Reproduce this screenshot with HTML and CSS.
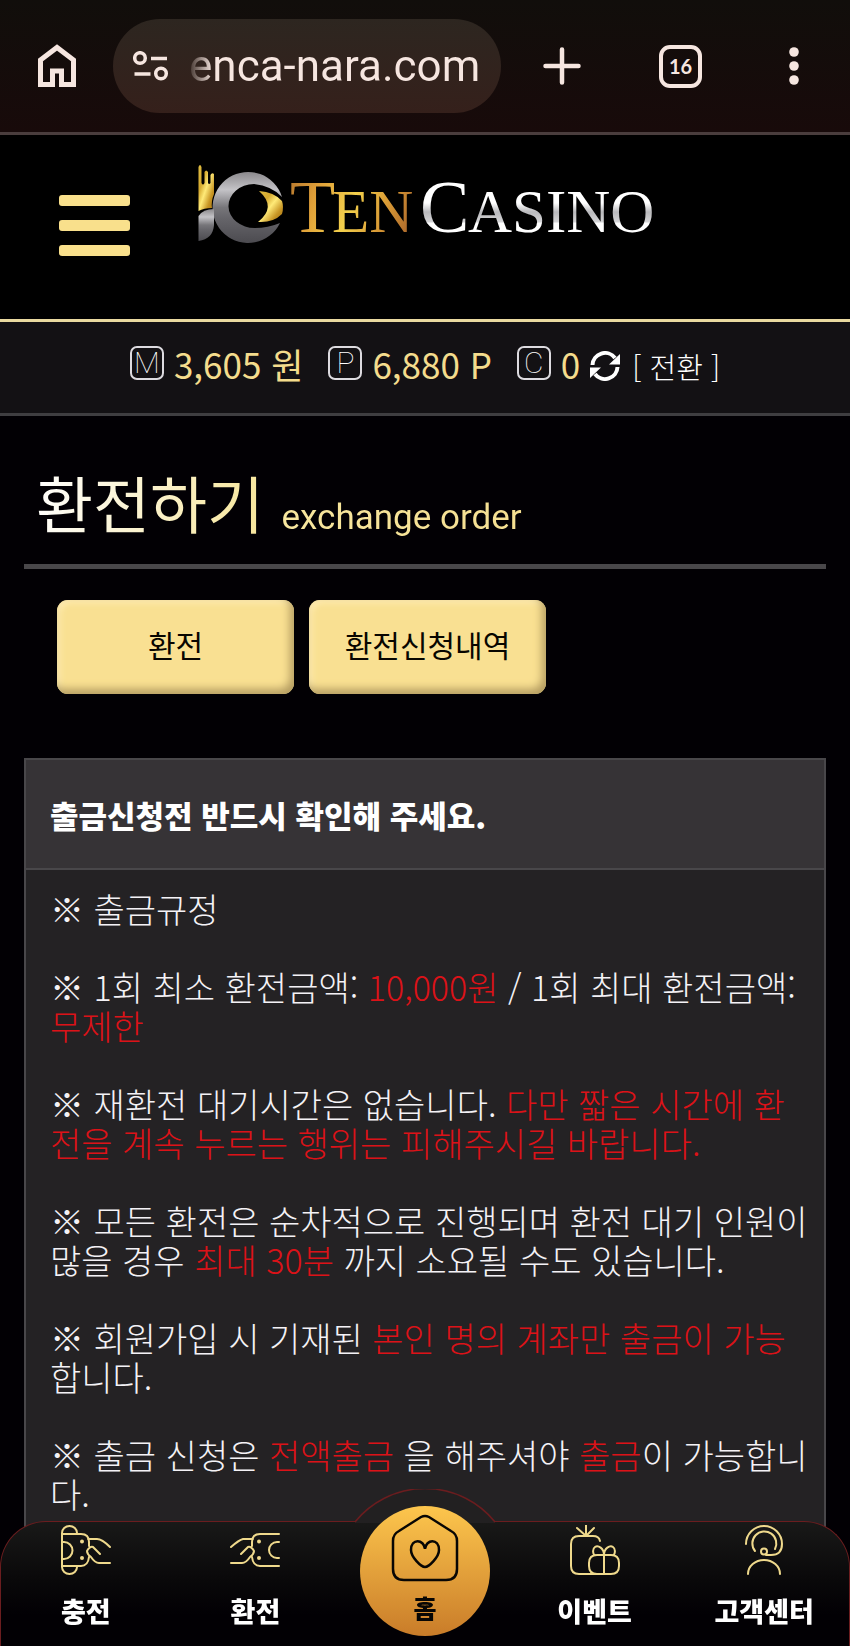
FILE: index.html
```html
<!DOCTYPE html>
<html lang="ko">
<head>
<meta charset="utf-8">
<meta name="viewport" content="width=device-width, initial-scale=1">
<title>환전하기</title>
<link rel="stylesheet" href="styles.css">
</head>
<body>
<div class="browser-bar">
  <button class="bar-button" type="button" aria-label="Home">
    <svg width="40" height="44" viewBox="0 0 40 44" fill="none" stroke="currentColor" stroke-width="5"><path d="M3.500 40.500V16L20 3.500 36.500 16V40.500H24.500V27H15.500V40.500Z"/></svg>
  </button>
  <div class="address">
    <svg width="36" height="30" viewBox="0 0 36 30" fill="none" stroke="currentColor" stroke-width="3.500"><circle cx="7" cy="7" r="5.300"/><circle cx="28" cy="22.500" r="5.300"/><path d="M18 7.500H34M1.500 23H17.500"/></svg>
    <span class="url">enca-nara.com</span>
  </div>
  <button class="bar-button" type="button" aria-label="New tab">
    <svg width="38" height="38" viewBox="0 0 38 38" stroke="currentColor" stroke-width="4.500" stroke-linecap="round"><path d="M19 2.500V35.500M2.500 19H35.500"/></svg>
  </button>
  <button class="bar-button" type="button" aria-label="Tabs"><span class="tabs">16</span></button>
  <button class="bar-button" type="button" aria-label="Menu">
    <svg width="10" height="38" viewBox="0 0 10 38" fill="currentColor"><circle cx="5" cy="5" r="4.800"/><circle cx="5" cy="19" r="4.800"/><circle cx="5" cy="33" r="4.800"/></svg>
  </button>
</div>

<header class="site-header">
  <button class="menu" type="button" aria-label="메뉴"><i></i><i></i><i></i></button>
  <a class="logo" href="#" aria-label="Ten Casino">
    <svg width="460" height="96" viewBox="0 0 460 96">
      <defs>
        <linearGradient id="silver" x1="0" y1="0" x2="0" y2="1"><stop offset="0" stop-color="#8b898c"/><stop offset=".25" stop-color="#c4c3c7"/><stop offset=".5" stop-color="#77767a"/><stop offset=".65" stop-color="#66656a"/><stop offset="1" stop-color="#4c4b50"/></linearGradient>
        <linearGradient id="gold" x1="0" y1="0" x2="1" y2="1"><stop offset="0" stop-color="#e0bd42"/><stop offset=".3" stop-color="#d6aa2e"/><stop offset=".5" stop-color="#ffea78"/><stop offset=".75" stop-color="#c79524"/><stop offset="1" stop-color="#9b6b10"/></linearGradient>
        <linearGradient id="ten" gradientUnits="userSpaceOnUse" x1="90" y1="25" x2="214" y2="72"><stop offset="0" stop-color="#b8792e"/><stop offset=".22" stop-color="#e0a038"/><stop offset=".5" stop-color="#f3d04c"/><stop offset=".75" stop-color="#d99a35"/><stop offset="1" stop-color="#a8642a"/></linearGradient>
        <linearGradient id="casino" gradientUnits="userSpaceOnUse" x1="0" y1="22" x2="0" y2="72"><stop offset="0" stop-color="#fff"/><stop offset=".42" stop-color="#fff"/><stop offset=".6" stop-color="#b9b9bc"/><stop offset=".8" stop-color="#d4d4d6"/><stop offset=".82" stop-color="#fff"/><stop offset="1" stop-color="#fff"/></linearGradient>
      </defs>
      <path fill="url(#gold)" d="M.500 7Q2 3 3.500 7V23Q5 26 6.500 23V12Q8 9 10 12V23Q11 25 12.500 23V15Q14 12 16 14V34Q13 41 14 48Q6 48 .500 51Z"/>
      <path fill="url(#silver)" d="M84 37A35.500 35.500 0 1 0 82 63Q70 68 57 68A26 22 0 1 1 56 24Q74 26 84 37Z"/>
      <path fill="url(#silver)" d="M.500 56Q5 49 16 49V65Q15 79 .500 81Z"/>
      <path fill="url(#gold)" d="M61 31Q76 32 84 41Q86 47 84 54Q75 63 60 62Q79 47 61 31Z"/>
      <text class="logo-text" y="72" fill="url(#ten)"><tspan x="92" class="logo-cap">T</tspan><tspan x="134">EN</tspan></text>
      <text class="logo-text" y="72" fill="url(#casino)"><tspan x="222" class="logo-cap">C</tspan><tspan x="270">ASINO</tspan></text>
    </svg>
  </a>
</header>

<section class="balances">
  <div class="balance"><span class="badge">M</span><span>3,605 원</span></div>
  <div class="balance"><span class="badge">P</span><span>6,880 P</span></div>
  <div class="balance"><span class="badge">C</span><span>0</span>
    <button class="convert" type="button">
      <svg width="30" height="30" viewBox="0 0 30 30"><g fill="none" stroke="currentColor" stroke-width="4"><path d="M2.500 14A12.500 12.500 0 0 1 25 7"/><path d="M27.500 16A12.500 12.500 0 0 1 5 23"/></g><path fill="currentColor" d="M30 3V13.500H19ZM0 27V16.500H11Z"/></svg>
      [ 전환 ]
    </button>
  </div>
</section>

<main class="page">
  <h1 class="title"><span class="title-text">환전하기 <small>exchange order</small></span></h1>
  <div class="tabs-row">
    <button class="gold-button" type="button">환전</button>
    <button class="gold-button" type="button">환전신청내역</button>
  </div>
  <section class="card">
    <h2 class="card-head">출금신청전 반드시 확인해 주세요.</h2>
    <div class="card-body">
      <p>※ 출금규정</p>
      <p>※ 1회 최소 환전금액: <em>10,000원</em> / 1회 최대 환전금액: <br><em>무제한</em></p>
      <p>※ 재환전 대기시간은 없습니다. <em>다만 짧은 시간에 환<br>전을 계속 누르는 행위는 피해주시길 바랍니다.</em></p>
      <p>※ 모든 환전은 순차적으로 진행되며 환전 대기 인원이<br>많을 경우 <em>최대 30분</em> 까지 소요될 수도 있습니다.</p>
      <p>※ 회원가입 시 기재된 <em>본인 명의 계좌만 출금이 가능</em><br>합니다.</p>
      <p>※ 출금 신청은 <em>전액출금</em> 을 해주셔야 <em>출금</em>이 가능합니<br>다.</p>
    </div>
  </section>
</main>

<nav class="bottom-nav">
  <svg class="hump" width="140" height="34" viewBox="0 0 140 34"><path d="M0 33A90 90 0 0 1 140 33V34H0Z" fill="#222021"/><path d="M0 33A90 90 0 0 1 140 33" fill="none" stroke="#6b1d1f" stroke-width="1.500"/></svg>
  <a class="nav-item" href="#">
    <svg class="nav-icon" width="50" height="50" viewBox="0 0 50 50"><path d="M1 8V42M1 8A7.500 7 0 0 1 16 8M1 42A7.500 7 0 0 0 16 42M1 9H20Q28 9 28 17V21M1 41H20Q27 41 28 32M1 17H3A8.500 8.500 0 0 1 3 34H1M27 14H36Q41 14 49 22M39 29L32 22Q29 21 26 26Q26 29 30 32Q34 38 38 38H49"/><circle class="dot" cx="21" cy="16.500" r="2"/><circle class="dot" cx="21" cy="33" r="2"/></svg>
    <span>충전</span>
  </a>
  <a class="nav-item" href="#">
    <svg class="nav-icon" width="50" height="50" viewBox="0 0 50 50"><path d="M49 9H30Q22 9 22 17V21M49 41H30Q23 41 22 32M49 17H47A8 8 0 0 0 47 33H49M23 14H13Q9 15 1 22M11 29L18 22Q21 21 24 26Q24 29 20 32Q16 38 12 38H1"/><circle class="dot" cx="29" cy="16.500" r="2"/><circle class="dot" cx="29" cy="33" r="2"/></svg>
    <span>환전</span>
  </a>
  <a class="nav-item nav-home" href="#">
    <span class="home-disc">
      <svg width="70" height="68" viewBox="0 0 70 68" fill="none" stroke="#080604" stroke-width="2.500"><path d="M31 3Q35 1 39 3L61 17Q67 20 67 27V55Q67 66 56 66H14Q3 66 3 55V27Q3 20 9 17Z"/><path d="M35 35C34 25 21 24 21 36C21 43 31 53 35 53S49 43 49 36C49 24 36 25 35 35Z"/></svg>
      <span>홈</span>
    </span>
  </a>
  <a class="nav-item" href="#">
    <svg class="nav-icon" width="50" height="50" viewBox="0 0 50 50"><path d="M30 16Q29 11 23 11H9Q1 11 1 19V41Q1 49 9 49H41Q49 49 49 41V38Q49 30 41 30H27Q19 30 19 38V41Q19 49 27 49M34 30V49M16 11V0M15 10L7 3M17 10L24 3M34 30C34 23 28 20 25 22S23 30 25 30M34 30C34 23 40 20 43 22S45 30 43 30"/></svg>
    <span>이벤트</span>
  </a>
  <a class="nav-item" href="#">
    <svg class="nav-icon" width="50" height="50" viewBox="0 0 50 50"><path d="M7 19A18 18 0 0 1 43 19Q43 30 32 30H27M16 26A12 12 0 1 1 36 24M9 49A16 14 0 0 1 41 49"/><circle cx="25" cy="26.500" r="3"/></svg>
    <span>고객센터</span>
  </a>
</nav>
</body>
</html>
```
FILE: styles.css
```css
* { box-sizing: border-box; }
body {
  margin: 0;
  min-height: 100vh;
  display: flex;
  flex-direction: column;
  background: #020004;
  color: #f4f2f6;
  font-family: "Noto Sans CJK KR", sans-serif;
}
button { font: inherit; color: inherit; background: none; border: 0; padding: 0; }
a { color: inherit; text-decoration: none; }
svg { display: block; flex: none; }

.browser-bar {
  display: grid;
  grid-template-columns: 113px 1fr 122px 115px 112px;
  align-items: center;
  padding: 19px 0;
  border-bottom: 3px solid #4a3d3d;
  background: linear-gradient(#110e0b, #180a0a);
  color: #f6e6e0;
}
.bar-button { display: flex; justify-content: center; }
.address {
  display: flex;
  align-items: center;
  gap: 20px;
  height: 94px;
  padding: 0 20px;
  border-radius: 47px;
  background: linear-gradient(#2d2620, #35201b);
}
.url {
  font: 44px/60px Roboto, sans-serif;
  white-space: nowrap;
  background: linear-gradient(90deg, #40322c, #f6e6e0 24px);
  background-clip: text;
  color: transparent;
}
.tabs {
  width: 43px;
  height: 43px;
  border: 4px solid;
  border-radius: 11px;
  font: 700 20px/35px Lato, sans-serif;
  text-align: center;
}

.site-header {
  display: flex;
  align-items: flex-start;
  gap: 68px;
  height: 187px;
  padding: 25px 59px;
  border-bottom: 3px solid #e9d9a0;
  background: #000;
}
.menu {
  display: flex;
  flex-direction: column;
  gap: 14px;
  width: 71px;
  padding-top: 35px;
}
.menu i { height: 11px; border-radius: 3px; background: #f9e08c; }
.logo-text { font: 61px "Liberation Serif", serif; }
.logo-cap { font-size: 74px; }

.balances {
  display: flex;
  justify-content: center;
  align-items: flex-start;
  gap: 25px;
  height: 94px;
  padding-top: 15px;
  border-bottom: 3px solid #3f3e41;
  background: #131114;
  color: #f4dc8d;
  font-size: 35px;
  line-height: 54px;
  white-space: nowrap;
}
.balance { display: flex; align-items: flex-start; gap: 10px; }
.badge {
  width: 34px;
  height: 34px;
  margin-top: 9px;
  border: 2px solid #dddbe0;
  border-radius: 7px;
  color: #fff;
  font: 100 30px/30px Roboto, sans-serif;
  text-align: center;
}
.convert {
  display: flex;
  align-items: center;
  gap: 12px;
  padding-top: 2px;
  color: #fff;
  font-size: 29px;
  font-weight: 300;
}

.page {
  flex: 1;
  display: flex;
  flex-direction: column;
  padding: 0 24px;
}
.title {
  margin: 0;
  padding: 41px 12px 17px;
  border-bottom: 5px solid #49474a;
  font-size: 62px;
  font-weight: 400;
  line-height: 90px;
}
.title-text {
  background: linear-gradient(100deg, #fff, #f8e7a0 45%, #f5df91);
  background-clip: text;
  color: transparent;
}
.title small { font: 35px/36px Roboto, sans-serif; }
.tabs-row { display: flex; gap: 15px; padding: 31px 33px 64px; }
.gold-button {
  flex: 0 1 237px;
  height: 94px;
  padding-bottom: 6px;
  border-radius: 11px;
  background: #f9e092;
  box-shadow: inset -4px -5px 8px #b59d61, inset 3px 3px 6px #ffedb4;
  color: #080600;
  font-size: 30px;
}
.card {
  flex: 1;
  border: 2px solid #49474a;
  border-bottom: 0;
  background: #242224;
}
.card-head {
  margin: 0;
  padding: 32px 24px 31px;
  border-bottom: 2px solid #49474a;
  background: #363336;
  color: #fff;
  font-size: 31px;
  font-weight: 900;
  line-height: 45px;
}
.card-body {
  padding: 19px 0 0 24px;
  font-size: 34px;
  font-weight: 300;
  line-height: 39px;
}
.card-body p { margin: 0 0 39px; }
.card-body em { color: #dc1218; font-style: normal; }

.bottom-nav {
  position: fixed;
  inset: auto 0 0;
  display: grid;
  grid-template-columns: repeat(5, 1fr);
  height: 125px;
  border: 1px solid #6b1d1f;
  border-bottom: 0;
  border-radius: 46px 46px 0 0;
  background: linear-gradient(#191918, #0a090a 45%, #020004 75%);
  color: #fff;
}
.hump {
  position: absolute;
  bottom: 123px;
  left: 50%;
  margin-left: -70px;
}
.nav-item {
  display: flex;
  flex-direction: column;
  align-items: center;
  gap: 16px;
  padding-top: 3px;
  font-size: 27px;
  font-weight: 900;
  line-height: 39px;
  white-space: nowrap;
}
.nav-icon { fill: none; stroke: #efd98c; stroke-width: 2; stroke-linecap: round; stroke-linejoin: round; }
.nav-icon .dot { fill: #efd98c; stroke: none; }
.nav-home { position: relative; }
.home-disc {
  position: absolute;
  top: -16px;
  display: flex;
  flex-direction: column;
  align-items: center;
  gap: 6px;
  width: 130px;
  height: 130px;
  padding-top: 8px;
  border-radius: 50%;
  background: linear-gradient(#fdc64d, #c97c29);
  color: #080604;
  font-size: 25px;
}
```
